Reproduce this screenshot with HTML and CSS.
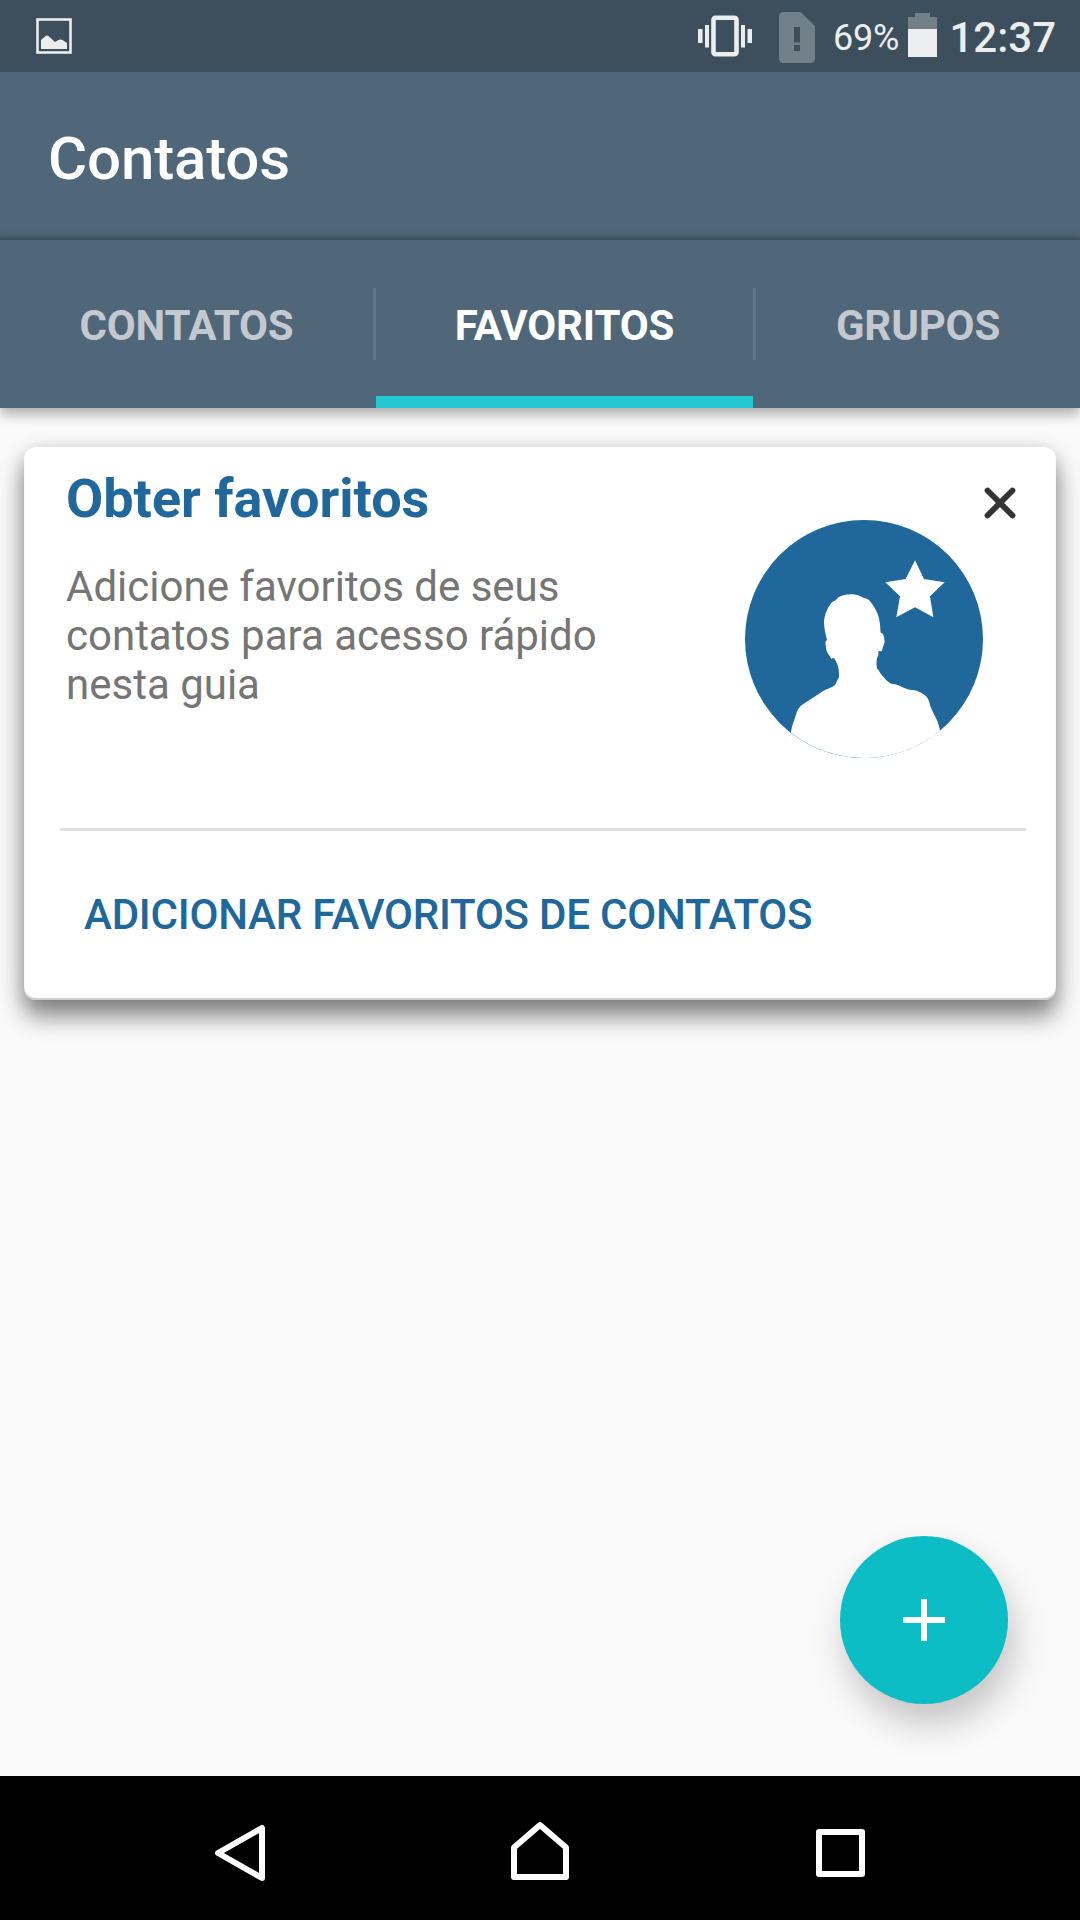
FILE: index.html
```html
<!DOCTYPE html>
<html lang="pt-BR">
<head>
<meta charset="utf-8">
<title>Contatos</title>
<link rel="stylesheet" href="styles.css">
</head>
<body>
<div class="screen">
  <header class="status-bar">
    <svg class="icon-picture" width="36" height="36" viewBox="0 0 36 36">
      <rect x="1.5" y="1.5" width="33" height="33" fill="none" stroke="#ecedef" stroke-width="2.6"/>
      <path d="M5 31V22L9 18.500Q11 16.300 13 18.500L19 24L22.500 22Q24.500 20.800 26.500 22L31 25V31Z" fill="#ecedef"/>
    </svg>
    <svg class="icon-vibrate" width="54" height="42" viewBox="0 0 54 42">
      <g fill="#ecedef"><rect y="14" width="4.500" height="14"/><rect x="7" y="10" width="4" height="22.500"/><rect x="43" y="10" width="4" height="22.500"/><rect x="49.500" y="14" width="4.500" height="14"/></g>
      <rect x="15.500" y="2.700" width="23" height="36.500" rx="2" fill="none" stroke="#ecedef" stroke-width="4.600"/>
    </svg>
    <svg class="icon-sim" width="36" height="51" viewBox="0 0 36 51">
      <path fill="#72808a" fill-rule="evenodd" d="M5 0H21.500L36 14V46Q36 51 31 51H5Q0 51 0 46V5Q0 0 5 0ZM15 15V30.500H21V15ZM15 33V39H21V33Z"/>
    </svg>
    <span class="battery-level">69%</span>
    <svg class="icon-battery" width="29" height="44" viewBox="0 0 29 44">
      <path d="M7 0H22V4H29V16H0V4H7Z" fill="#72808a"/>
      <rect y="16" width="29" height="28" fill="#ecedef"/>
    </svg>
    <span class="clock">12:37</span>
  </header>

  <div class="app-bar"><h1 class="app-title">Contatos</h1></div>

  <nav class="tabs">
    <a class="tab tab-contacts">CONTATOS</a>
    <i class="tab-divider"></i>
    <a class="tab tab-favorites active">FAVORITOS</a>
    <i class="tab-divider"></i>
    <a class="tab tab-groups">GRUPOS</a>
  </nav>

  <main class="content">
    <section class="card">
      <div class="card-body">
        <div class="card-text">
          <h2 class="card-title">Obter favoritos</h2>
          <p class="card-description">Adicione favoritos de seus<br>contatos para acesso rápido<br>nesta guia</p>
        </div>
        <svg class="illustration" width="238" height="238" viewBox="75 239 714 714">
          <circle cx="432" cy="596" r="357" fill="#20679b"/>
          <path fill="#fff" d="M585 360L612 416L674 426L630 468L640 531L585 501L529 531L540 468L496 426L557 416Z"/>
          <path fill="#fff" d="M213 877C215 855 223 840 228 823C232 807 238 799 250 791L313 750C327 744 337 741 345 734L357 710C357 690 357 675 342 653L333 655C330 645 322 643 318 624L316 604L321 599C316 580 312 560 312 545C313 522 325 495 338 484L347 480L355 471C375 459 405 460 420 467L432 473C445 475 449 480 460 496C483 530 480 560 482 577Q489 577 492 589L494 605L485 633L476 632L475 644C468 658 469 670 471 685C477 689 479 695 483 702C493 712 500 724 513 730Q526 731 535 735C547 740 555 746 568 748Q589 748 605 758C622 768 627 777 631 797C640 823 655 838 660 871A356.500 356.500 0 0 1 213 877Z"/>
        </svg>
        <svg class="close" width="32" height="32" viewBox="0 0 32 32">
          <path d="M3.500 3.500L28.500 28.500M28.500 3.500L3.500 28.500" stroke="#333" stroke-width="5.800" stroke-linecap="round"/>
        </svg>
      </div>
      <a class="card-action">ADICIONAR FAVORITOS DE CONTATOS</a>
    </section>
    <div class="fab">
      <svg width="42" height="42" viewBox="0 0 42 42"><path d="M18 0H24V18H42V24H24V42H18V24H0V18H18Z" fill="#fff"/></svg>
    </div>
  </main>

  <footer class="nav-bar">
    <svg class="nav-back" width="52" height="58" viewBox="0 0 52 58"><path d="M48 4V54L4 29Z" fill="none" stroke="#fff" stroke-width="6" stroke-linejoin="round"/></svg>
    <svg class="nav-home" width="58" height="60" viewBox="0 0 58 60"><path d="M3 26.500L29 4L55 26.500V56H3Z" fill="none" stroke="#fff" stroke-width="6" stroke-linejoin="round"/></svg>
    <svg class="nav-recent" width="49" height="48" viewBox="0 0 49 48"><rect x="3" y="3" width="43" height="42" fill="none" stroke="#fff" stroke-width="6" stroke-linejoin="round"/></svg>
  </footer>
</div>
</body>
</html>
```
FILE: styles.css
```css
* { box-sizing: border-box; }
body { margin: 0; font-family: Roboto, sans-serif; background: #fafafa; }
svg { display: block; flex: none; }
.screen { width: 1080px; height: 1920px; display: flex; flex-direction: column; overflow: hidden; }

.status-bar { height: 72px; flex: none; display: flex; align-items: flex-start; padding: 0 24px 0 36px; background: #3d4f5d; color: #ecedef; white-space: nowrap; }
.icon-picture { margin-top: 18px; }
.icon-vibrate { margin: 15px 0 0 626px; }
.icon-sim { margin: 12px 0 0 27px; }
.battery-level { width: 76px; margin-left: 18px; font-size: 36px; line-height: 77px; letter-spacing: -.2px; }
.icon-battery { margin-top: 13px; }
.clock { margin-left: 12px; font-size: 42px; font-weight: 500; line-height: 75px; }

.app-bar { height: 168px; flex: none; display: flex; align-items: center; padding: 5px 48px 0; background: linear-gradient(to top, rgba(62, 78, 90, .9), rgba(75, 99, 112, .5) 5px, rgba(80, 103, 122, 0) 16px), #50677a; }
.app-title { margin: 0; font-size: 60px; font-weight: 500; line-height: 72px; letter-spacing: -.15px; color: #fff; }

.tabs { height: 168px; flex: none; display: flex; align-items: center; background: #50677a; box-shadow: 0 6px 12px rgba(0, 0, 0, .32); }
.tab { height: 168px; display: flex; align-items: center; justify-content: center; padding-top: 3px; font-size: 42px; font-weight: 700; letter-spacing: -.15px; color: #c3c9cf; border-bottom: 0 solid #25c7d0; }
.tab-contacts { width: 373px; }
.tab-favorites { width: 377px; }
.tab-groups { width: 324px; }
.tab.active { color: #fff; padding-top: 15px; border-bottom-width: 12px; }
.tab-divider { width: 3px; height: 72px; background: #637884; }

.content { flex: 1; display: flex; flex-direction: column; justify-content: space-between; padding: 39px 24px 72px; }
.card { height: 553px; border-radius: 12px; background: #fff; box-shadow: inset 0 -2px 1px #ccc, 0 16px 24px rgba(0, 0, 0, .48), 0 0 20px rgba(0, 0, 0, .1); }
.card-body { height: 384px; margin: 0 30px 0 36px; padding: 20px 0 0 6px; display: flex; border-bottom: 3px solid #e0e0e0; }
.card-text { width: 679px; }
.card-title { margin: 0; font-size: 54px; font-weight: 700; line-height: 63px; color: #20679b; }
.card-description { margin: 32px 0 0; font-size: 42px; line-height: 49px; color: #757575; }
.illustration { margin-top: 53px; }
.close { margin: 20px 0 0 1px; }
.card-action { height: 168px; display: flex; align-items: center; padding: 0 0 2px 60px; font-size: 42px; font-weight: 500; letter-spacing: -.21px; color: #20679b; }

.fab { width: 168px; height: 168px; align-self: flex-end; margin-right: 48px; display: flex; align-items: center; justify-content: center; border-radius: 50%; background: #0dbdc5; box-shadow: 6px 20px 36px rgba(0, 0, 0, .22); }

.nav-bar { height: 144px; flex: none; display: flex; align-items: flex-start; padding-left: 214px; background: #000; }
.nav-back { margin-top: 48px; }
.nav-home { margin: 45px 0 0 245px; }
.nav-recent { margin: 53px 0 0 247px; }
```
